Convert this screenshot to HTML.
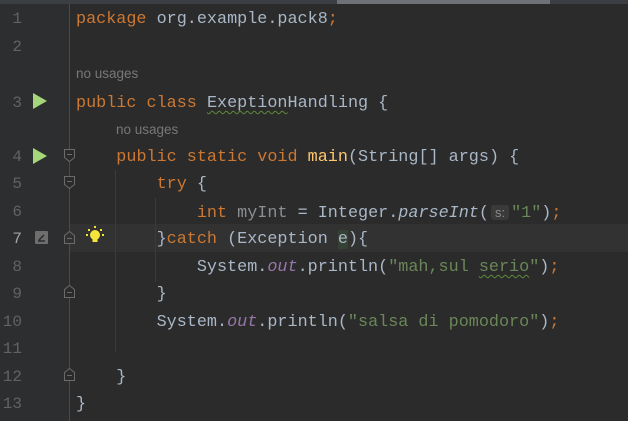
<!DOCTYPE html>
<html><head><meta charset="utf-8"><style>
body{margin:0;width:628px;height:421px;background:#2b2b2b;overflow:hidden;position:relative;font-family:"Liberation Mono",monospace;font-size:16.8px;}
.g{position:absolute;left:0;top:0;width:69px;height:421px;background:#2d2e30;}
.gl{position:absolute;left:69px;top:4px;width:1px;height:417px;background:#4a4b4d;}
.top{position:absolute;left:0;top:0;width:628px;height:4px;background:#3b3e42;}
.top2{position:absolute;left:337px;top:0;width:213px;height:4px;background:#6e7176;}
.cur{position:absolute;left:70px;top:224px;width:558px;height:28px;background:#323232;}
.n{position:absolute;left:0;width:22px;text-align:right;color:#606366;font-size:16px;line-height:27px;height:27px;font-family:"Liberation Mono",monospace;}
.l{position:absolute;left:76px;line-height:27px;height:27px;color:#a9b7c6;white-space:pre;}
.k{color:#cc7832}.s{color:#6a8759}.o{color:#9876aa;font-style:italic}.i{font-style:italic}.m{color:#ffc66d}
.u{position:absolute;color:#787878;font-family:"Liberation Sans",sans-serif;font-size:13.5px;line-height:20px;}
.w{text-decoration:underline wavy #5d8a3a;text-decoration-thickness:1px;text-underline-offset:3px}
.ig{position:absolute;width:1px;background:#3b3b3b;}
.run{position:absolute;left:33px;width:0;height:0;border-top:8px solid transparent;border-bottom:8px solid transparent;border-left:14px solid #a6d67a;}
.f{position:absolute;left:63px;}
</style></head><body>
<div class="g"></div><div class="gl"></div>
<div class="top"></div><div class="top2"></div>
<div class="cur"></div>
<div class="ig" style="left:115px;top:170px;height:182px"></div>
<div class="ig" style="left:155px;top:198px;height:84px"></div>

<div class="n" style="top:6px">1</div>
<div class="n" style="top:34px">2</div>
<div class="n" style="top:90px">3</div>
<div class="n" style="top:144px">4</div>
<div class="n" style="top:171px">5</div>
<div class="n" style="top:199px">6</div>
<div class="n" style="top:226px;color:#a4a3a3">7</div>
<div class="n" style="top:254px">8</div>
<div class="n" style="top:281px">9</div>
<div class="n" style="top:309px">10</div>
<div class="n" style="top:336px">11</div>
<div class="n" style="top:364px">12</div>
<div class="n" style="top:391px">13</div>

<div class="run" style="top:93px"></div>
<div class="run" style="top:148px"></div>

<svg class="f" style="top:148px" width="13" height="15" viewBox="0 0 13 15"><path d="M1.5 1.5H11.5V9.5L6.5 13.5L1.5 9.5Z" fill="#2b2b2b" stroke="#6a6b6d"/><path d="M4 6.5H9" stroke="#6a6b6d"/></svg>
<svg class="f" style="top:175px" width="13" height="15" viewBox="0 0 13 15"><path d="M1.5 1.5H11.5V9.5L6.5 13.5L1.5 9.5Z" fill="#2b2b2b" stroke="#6a6b6d"/><path d="M4 6.5H9" stroke="#6a6b6d"/></svg>
<svg class="f" style="top:230px" width="13" height="15" viewBox="0 0 13 15"><path d="M1.5 13.5H11.5V5.5L6.5 1.5L1.5 5.5Z" fill="#323232" stroke="#6a6b6d"/><path d="M4 8.5H9" stroke="#6a6b6d"/></svg>
<svg class="f" style="top:284px" width="13" height="15" viewBox="0 0 13 15"><path d="M1.5 13.5H11.5V5.5L6.5 1.5L1.5 5.5Z" fill="#2b2b2b" stroke="#6a6b6d"/><path d="M4 8.5H9" stroke="#6a6b6d"/></svg>
<svg class="f" style="top:367px" width="13" height="15" viewBox="0 0 13 15"><path d="M1.5 13.5H11.5V5.5L6.5 1.5L1.5 5.5Z" fill="#2b2b2b" stroke="#6a6b6d"/><path d="M4 8.5H9" stroke="#6a6b6d"/></svg>

<svg style="position:absolute;left:35px;top:231px" width="13" height="13" viewBox="0 0 13 13"><rect width="13" height="13" rx="1" fill="#6e6e6e"/><path d="M3 10H10M4 9L9 4" stroke="#2b2b2b" stroke-width="1.5"/></svg>
<svg style="position:absolute;left:84px;top:224px" width="22" height="22" viewBox="0 0 22 22"><g fill="#f5e53b"><circle cx="11" cy="11" r="5"/><rect x="8.5" y="14" width="5" height="4"/><rect x="10" y="2" width="2" height="2"/><rect x="4" y="5" width="2" height="2"/><rect x="16" y="5" width="2" height="2"/><rect x="2" y="10" width="2" height="2"/><rect x="18" y="10" width="2" height="2"/></g></svg>

<div class="l" style="top:6px"><span class="k">package</span> org.example.pack8<span class="k">;</span></div>
<div class="u" style="left:76px;top:64px">no usages</div>
<div class="l" style="top:90px"><span class="k">public class</span> <span class="w">Exeption</span>Handling {</div>
<div class="u" style="left:116px;top:120px">no usages</div>
<div class="l" style="top:144px">    <span class="k">public static void</span> <span class="m">main</span>(String[] args) {</div>
<div class="l" style="top:171px">        <span class="k">try</span> {</div>
<div class="l" style="top:199px">            <span class="k">int</span> <span style="color:#8a8f94">myInt</span> = Integer.<span class="i">parseInt</span>(<span style="background:#3a3a3a;color:#8a8a8a;font-family:'Liberation Sans',sans-serif;font-size:13px;border-radius:3px;padding:0 4px;margin:0 2px">s:</span><span class="s">"1"</span>)<span class="k">;</span></div>
<div class="l" style="top:226px">        }<span class="k">catch</span> (Exception <span style="background:#344134">e</span>){</div>
<div class="l" style="top:254px">            System.<span class="o">out</span>.println(<span class="s">"mah,sul <span class="w">serio</span>"</span>)<span class="k">;</span></div>
<div class="l" style="top:281px">        }</div>
<div class="l" style="top:309px">        System.<span class="o">out</span>.println(<span class="s">"salsa di pomodoro"</span>)<span class="k">;</span></div>
<div class="l" style="top:364px">    }</div>
<div class="l" style="top:391px">}</div>
</body></html>
